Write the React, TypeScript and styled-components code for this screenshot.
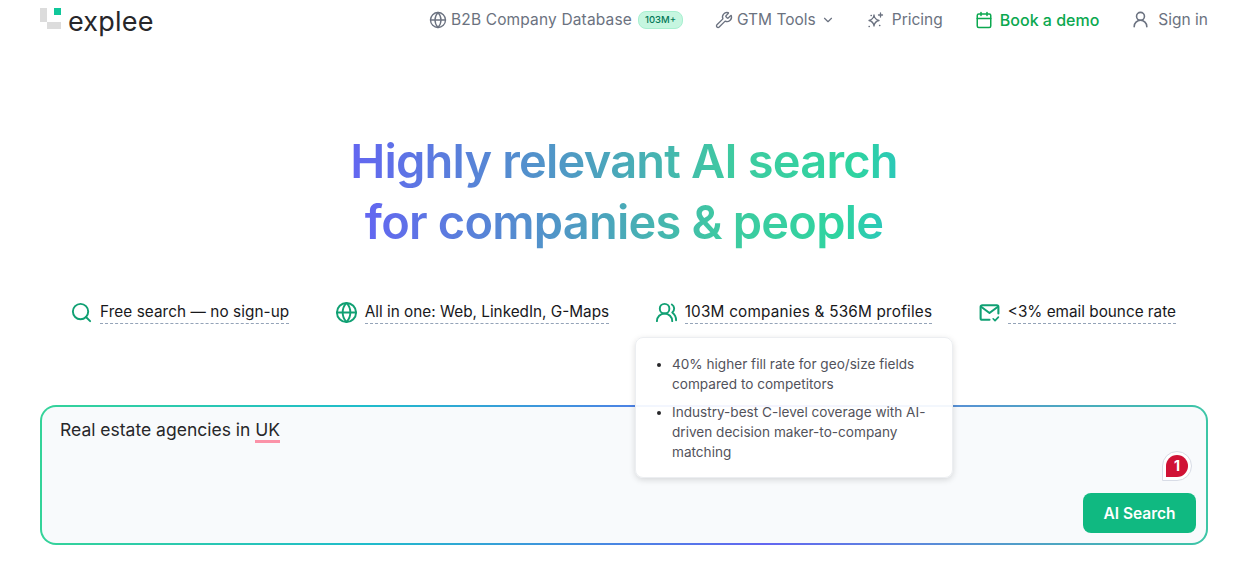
import React from "react";
import styled, { createGlobalStyle } from "styled-components";
import { Globe, Wrench, ChevronDown, Calendar, UserRound, Search, UsersRound } from "lucide-react";

const GlobalStyle = createGlobalStyle`
	html, body {
		margin: 0;
		padding: 0;
		background: #fff;
		font-family: "Inter", "Liberation Sans", sans-serif;
	}
	* {
		box-sizing: border-box;
	}
`;

const Page = styled.div`
	width: 1239px;
	height: 562px;
	overflow: hidden;
	padding: 0 31px 0 40px;
`;
const Header = styled.header`
	height: 40px;
	display: flex;
	justify-content: space-between;
	align-items: center;
`;
const Logo = styled.div`
	display: flex;
	align-items: center;
	gap: 7px;
	color: #27272a;
	font-size: 27px;
	letter-spacing: 0.2px;
	margin-top: 2px;
`;
const Mark = styled.svg`
	margin-bottom: 5px;
`;
const Nav = styled.nav`
	display: flex;
	align-items: center;
	gap: 32px;
	margin-bottom: 1px;
`;
const NavItem = styled.a<{ $green?: boolean; $gap?: number }>`
	display: flex;
	align-items: center;
	gap: ${(props) => props.$gap ?? 4}px;
	font-size: ${(props) => (props.$green ? 16 : 15.5)}px;
	color: ${(props) => (props.$green ? "#0ba84f" : "#6b7280")};
	font-weight: ${(props) => (props.$green ? 500 : 400)};
	white-space: nowrap;
`;
const WideLabel = styled.span`
	letter-spacing: 0.15px;
`;
const Chevron = styled(ChevronDown)`
	margin: 0 -1px 0 1px;
`;
const Badge = styled.span`
	margin-left: 2px;
	font-size: 9.5px;
	font-weight: 500;
	color: #047857;
	background: #c6f6e0;
	border: 1px solid #a7f0d0;
	border-radius: 8px;
	padding: 2px 6px;
	line-height: 12px;
`;
const Title = styled.h1`
	margin: 90px 0 0;
	display: flex;
	flex-direction: column;
	align-items: center;
	font-size: 47px;
	line-height: 61px;
	font-weight: 600;
	letter-spacing: -0.8px;
`;
const TitleLine = styled.span`
	background: linear-gradient(90deg, #6366f1 0%, #4f9ac4 40%, #3ecba0 70%, #2fd4a0 92%, #2bc8b8 100%);
	-webkit-background-clip: text;
	background-clip: text;
	color: transparent;
`;
const Features = styled.div`
	position: relative;
	margin-top: 49px;
	padding: 0 32px;
	display: flex;
	justify-content: space-between;
`;
const Feature = styled.div`
	display: flex;
	align-items: center;
	gap: 8px;
	color: #10a073;
	svg {
		margin: -2px -1px -2px -2px;
	}
`;
const FeatureText = styled.span<{ $track?: number }>`
	font-size: 15.3px;
	line-height: 22px;
	color: #18181b;
	letter-spacing: ${(props) => props.$track ?? 0}px;
	border-bottom: 1px dashed #94a3b8;
	white-space: nowrap;
`;
const Tooltip = styled.div`
	position: absolute;
	left: 595px;
	top: 36px;
	width: 318px;
	height: 141px;
	background: rgba(255, 255, 255, 0.93);
	border: 1px solid #eceef1;
	border-radius: 8px;
	box-shadow: 0 2px 6px rgba(0, 0, 0, 0.14);
	z-index: 2;
	color: #52525b;
	font-size: 13.6px;
	line-height: 20px;
`;
const TipList = styled.ul`
	margin: 16px 0 0;
	padding: 0 16px 0 36px;
`;
const TipItem = styled.li`
	margin-bottom: 8px;
	&::marker {
		color: #27272a;
	}
`;
const SearchBox = styled.div`
	position: relative;
	margin-top: 81px;
	height: 140px;
	border: 2px solid transparent;
	border-radius: 16px;
	background:
		linear-gradient(#f8fafc, #f8fafc) padding-box,
		linear-gradient(90deg, #34d399 0%, #1fbccb 28%, #6366f1 62%, #5c88dc 75%, #3cc6a6 100%) border-box;
	padding: 12px 18px;
	font-size: 17.5px;
	line-height: 22px;
	color: #27272a;
`;
const Misspelled = styled.span`
	display: inline-block;
	line-height: 20px;
	border-bottom: 3px solid #fb92a8;
`;
const ErrorPin = styled.div`
	position: absolute;
	right: 14px;
	top: 44px;
	width: 30px;
	height: 30px;
	padding: 3px;
	background: #fff;
	border: 1px solid #d8dce6;
	border-radius: 50% 50% 50% 0;
`;
const ErrorDot = styled.div`
	width: 100%;
	height: 100%;
	display: flex;
	align-items: center;
	justify-content: center;
	background: #d01235;
	color: #fff;
	font-size: 14px;
	font-weight: 700;
	border-radius: 50% 50% 50% 0;
`;
const SearchButton = styled.button`
	position: absolute;
	right: 10px;
	bottom: 10px;
	width: 113px;
	height: 40px;
	border: 0;
	border-radius: 8px;
	background: #10b981;
	color: #fff;
	font-family: inherit;
	font-size: 15.5px;
	font-weight: 600;
`;

function LogoMark() {
	return (
		<Mark width="21" height="21" viewBox="0 0 21 21">
			<rect x="0" y="0" width="7" height="14" fill="#dcdcdc" />
			<rect x="7" y="14" width="14" height="7" fill="#dcdcdc" />
			<rect x="14" y="0" width="7" height="7" fill="#10c79a" />
		</Mark>
	);
}

function SparkleIcon() {
	return (
		<svg width="18" height="18" viewBox="0 0 18 18" fill="none" stroke="currentColor" strokeWidth="1.3" strokeLinejoin="round" strokeLinecap="round">
			<path d="M8 4C8.5 7.5 9.5 8.8 13 9.5 9.5 10.2 8.5 11.5 8 15 7.5 11.5 6.5 10.2 3 9.5 6.5 8.8 7.5 7.5 8 4Z" />
			<path d="M14.5 2v4M12.5 4h4" />
			<path d="M3 15.5h.4M5 4.5h.4M13.5 14.5h.4" />
		</svg>
	);
}

function MailCheckIcon() {
	return (
		<svg width="23" height="23" viewBox="-1 -1 22 22" fill="none" stroke="currentColor" strokeWidth="2" strokeLinejoin="round" strokeLinecap="round">
			<path d="M10 17H3a1.5 1.5 0 0 1-1.5-1.5v-11A1.5 1.5 0 0 1 3 3h14a1.5 1.5 0 0 1 1.5 1.5V11" />
			<path d="m2 4.5 8 6 8-6" />
			<path d="m13.5 16 1.8 1.8 3.2-3.3" strokeWidth="1.6" />
		</svg>
	);
}

export default function App() {
	return (
		<Page>
			<GlobalStyle />
			<Header>
				<Logo>
					<LogoMark />
					explee
				</Logo>
				<Nav>
					<NavItem>
						<Globe size={18} strokeWidth={1.8} />
						<WideLabel>B2B Company Database</WideLabel>
						<Badge>103M+</Badge>
					</NavItem>
					<NavItem>
						<Wrench size={18} strokeWidth={1.8} />
						GTM Tools
						<Chevron size={14} strokeWidth={2} />
					</NavItem>
					<NavItem $gap={8}>
						<SparkleIcon />
						Pricing
					</NavItem>
					<NavItem $green $gap={7}>
						<Calendar size={18} strokeWidth={2} />
						Book a demo
					</NavItem>
					<NavItem $gap={8}>
						<UserRound size={19} strokeWidth={2} />
						Sign in
					</NavItem>
				</Nav>
			</Header>
			<Title>
				<TitleLine>Highly relevant AI search</TitleLine>
				<TitleLine>for companies &amp; people</TitleLine>
			</Title>
			<Features>
				<Feature>
					<Search size={23} strokeWidth={2} />
					<FeatureText $track={0.08}>Free search — no sign-up</FeatureText>
				</Feature>
				<Feature>
					<Globe size={23} strokeWidth={2} />
					<FeatureText>All in one: Web, LinkedIn, G-Maps</FeatureText>
				</Feature>
				<Feature>
					<UsersRound size={23} strokeWidth={2} />
					<FeatureText $track={0.2}>103M companies &amp; 536M profiles</FeatureText>
				</Feature>
				<Feature>
					<MailCheckIcon />
					<FeatureText>&lt;3% email bounce rate</FeatureText>
				</Feature>
				<Tooltip>
					<TipList>
						<TipItem>40% higher fill rate for geo/size fields compared to competitors</TipItem>
						<TipItem>Industry-best C-level coverage with AI-driven decision maker-to-company matching</TipItem>
					</TipList>
				</Tooltip>
			</Features>
			<SearchBox>
				Real estate agencies in <Misspelled>UK</Misspelled>
				<ErrorPin>
					<ErrorDot>1</ErrorDot>
				</ErrorPin>
				<SearchButton>AI Search</SearchButton>
			</SearchBox>
		</Page>
	);
}
